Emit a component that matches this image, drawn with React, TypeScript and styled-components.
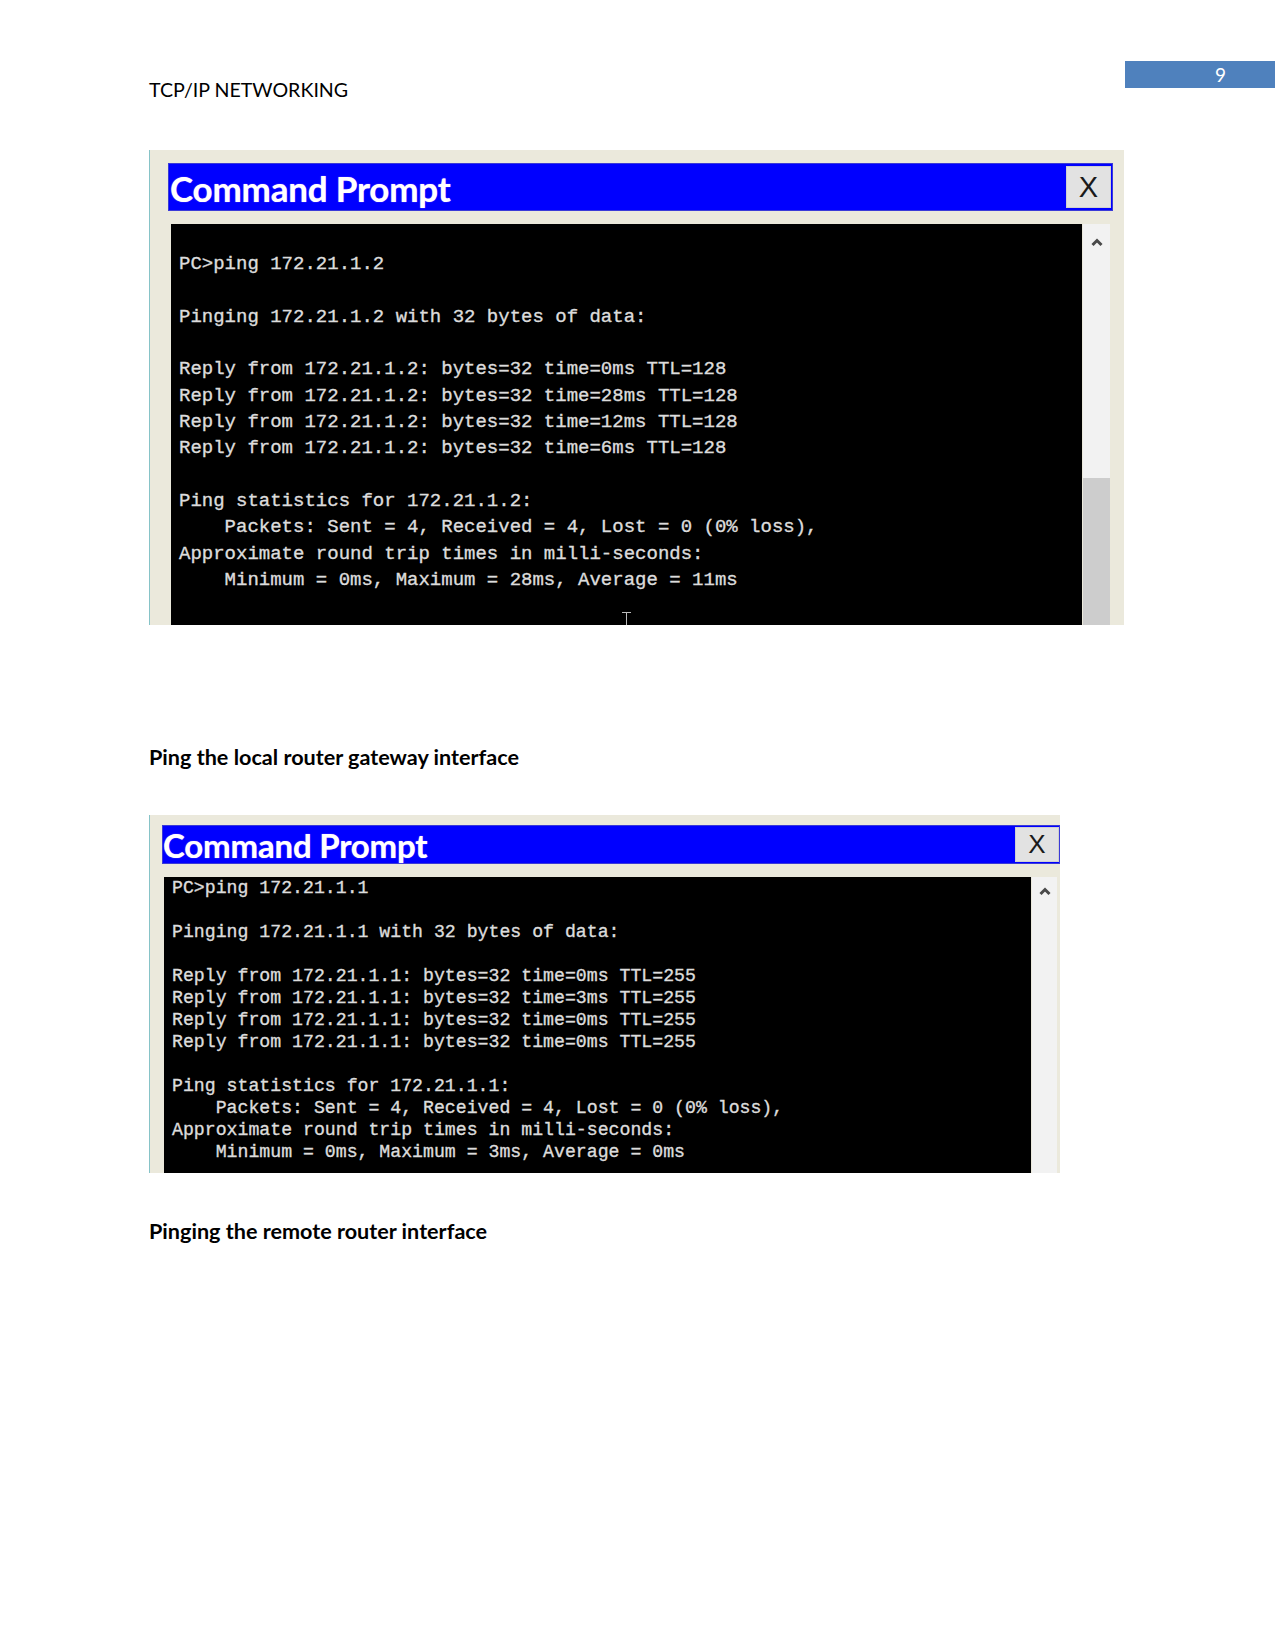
import React from "react";
import styled, { createGlobalStyle } from "styled-components";

const GlobalStyle = createGlobalStyle`
  html, body { margin: 0; padding: 0; background: #ffffff; }
  * { box-sizing: border-box; }
`;

const Page = styled.div`
  width: 1275px;
  min-height: 1650px;
  padding-left: 149px;
  font-family: Lato, "Liberation Sans", sans-serif;
  color: #000;
`;

const Header = styled.header`
  display: flex;
  justify-content: space-between;
  align-items: flex-start;
  padding-top: 61px;
`;

const RunningHead = styled.div`
  margin-top: 17px;
  font-size: 19.6px;
  line-height: 23px;
`;

const PageNumber = styled.div`
  width: 150px;
  height: 27px;
  background: #4f81bd;
  color: #ffffff;
  font-size: 19px;
  line-height: 27px;
  padding-left: 90px;
`;

type Size = "large" | "small";

const Window = styled.div<{ $size: Size }>`
  position: relative;
  overflow: hidden;
  background: #ebe9dc;
  margin-top: ${(p) => (p.$size === "large" ? "49px" : "45px")};
  width: ${(p) => (p.$size === "large" ? "975px" : "911px")};
  height: ${(p) => (p.$size === "large" ? "475px" : "358px")};
  padding: ${(p) => (p.$size === "large" ? "13px 11px 0 18px" : "10px 0 0 12px")};
  border-left: 1px solid #86c3c7;
  display: flex;
  flex-direction: column;
`;

const TitleBar = styled.div<{ $size: Size }>`
  display: flex;
  justify-content: space-between;
  align-items: flex-start;
  background: #0000ff;
  border: 1px solid #3a3ad8;
  height: ${(p) => (p.$size === "large" ? "48px" : "39px")};
  padding: ${(p) => (p.$size === "large" ? "2px 1px 0 1px" : "1px 0 0 0")};
  flex: none;
`;

const Title = styled.div<{ $size: Size }>`
  color: #ffffff;
  font-family: Lato, "Open Sans", sans-serif;
  font-weight: 700;
  font-size: ${(p) => (p.$size === "large" ? "35px" : "33px")};
  line-height: ${(p) => (p.$size === "large" ? "44px" : "36px")};
  letter-spacing: -0.2px;
  text-shadow: 0 0 1px rgba(255, 200, 255, 0.8);
`;

const CloseButton = styled.div<{ $size: Size }>`
  width: ${(p) => (p.$size === "large" ? "45px" : "44px")};
  height: ${(p) => (p.$size === "large" ? "42px" : "35px")};
  background: #e2e2e2;
  border: 1px solid #d0d0d0;
  color: #1a1a1a;
  font-family: "Liberation Sans", Arial, sans-serif;
  font-size: ${(p) => (p.$size === "large" ? "29px" : "26px")};
  line-height: ${(p) => (p.$size === "large" ? "40px" : "33px")};
  text-align: center;
`;

const Body = styled.div<{ $size: Size }>`
  flex: 1;
  display: flex;
  margin: ${(p) => (p.$size === "large" ? "13px 3px 0 3px" : "13px 3px 0 2px")};
  min-height: 0;
`;

const Terminal = styled.pre<{ $size: Size }>`
  position: relative;
  margin: 0;
  flex: 1;
  background: #000000;
  color: #dcdcdc;
  font-family: "Liberation Mono", "Courier New", monospace;
  font-size: ${(p) => (p.$size === "large" ? "19px" : "18.2px")};
  line-height: ${(p) => (p.$size === "large" ? "26.33px" : "22px")};
  padding: ${(p) => (p.$size === "large" ? "27px 0 0 8px" : "0 0 0 8px")};
  white-space: pre;
  overflow: hidden;
  -webkit-text-stroke: 0.35px #dcdcdc;
`;

const ScrollBar = styled.div<{ $size: Size }>`
  width: ${(p) => (p.$size === "large" ? "27px" : "25px")};
  margin-left: 1px;
  background: #f1f1f1;
  display: flex;
  flex-direction: column;
  align-items: center;
  flex: none;
`;

const ScrollUp = styled.div<{ $size: Size }>`
  height: ${(p) => (p.$size === "large" ? "254px" : "100%")};
  width: 100%;
  display: flex;
  justify-content: center;
  padding-top: ${(p) => (p.$size === "large" ? "14px" : "10px")};
  background: #f2f2f2;
`;

const ScrollThumb = styled.div`
  flex: 1;
  width: 100%;
  background: #cdcdcd;
`;

const IBeam = styled.div`
  position: absolute;
  left: 451px;
  bottom: 0;
  width: 9px;
  height: 13px;
  border-top: 1px solid #bbbbbb;
  &::after {
    content: "";
    position: absolute;
    left: 4px;
    top: 0;
    width: 1px;
    height: 13px;
    background: #bbbbbb;
  }
`;

const Caption = styled.p<{ $gap: number }>`
  margin: ${(p) => p.$gap}px 0 0 0;
  font-weight: 700;
  font-size: 21.6px;
  line-height: 26px;
`;

const Chevron = () => (
  <svg width="12" height="9" viewBox="0 0 12 9">
    <path d="M1.5 7 L6 2.5 L10.5 7" fill="none" stroke="#4a4a4a" strokeWidth="3" />
  </svg>
);

const text1 = `PC>ping 172.21.1.2

Pinging 172.21.1.2 with 32 bytes of data:

Reply from 172.21.1.2: bytes=32 time=0ms TTL=128
Reply from 172.21.1.2: bytes=32 time=28ms TTL=128
Reply from 172.21.1.2: bytes=32 time=12ms TTL=128
Reply from 172.21.1.2: bytes=32 time=6ms TTL=128

Ping statistics for 172.21.1.2:
    Packets: Sent = 4, Received = 4, Lost = 0 (0% loss),
Approximate round trip times in milli-seconds:
    Minimum = 0ms, Maximum = 28ms, Average = 11ms`;

const text2 = `PC>ping 172.21.1.1

Pinging 172.21.1.1 with 32 bytes of data:

Reply from 172.21.1.1: bytes=32 time=0ms TTL=255
Reply from 172.21.1.1: bytes=32 time=3ms TTL=255
Reply from 172.21.1.1: bytes=32 time=0ms TTL=255
Reply from 172.21.1.1: bytes=32 time=0ms TTL=255

Ping statistics for 172.21.1.1:
    Packets: Sent = 4, Received = 4, Lost = 0 (0% loss),
Approximate round trip times in milli-seconds:
    Minimum = 0ms, Maximum = 3ms, Average = 0ms`;

const CommandWindow: React.FC<{ size: Size; text: string; cursor?: boolean }> = ({ size, text, cursor }) => (
  <Window $size={size}>
    <TitleBar $size={size}>
      <Title $size={size}>Command Prompt</Title>
      <CloseButton $size={size}>X</CloseButton>
    </TitleBar>
    <Body $size={size}>
      <Terminal $size={size}>
        {text}
        {cursor && <IBeam />}
      </Terminal>
      <ScrollBar $size={size}>
        <ScrollUp $size={size}>
          <Chevron />
        </ScrollUp>
        {size === "large" && <ScrollThumb />}
      </ScrollBar>
    </Body>
  </Window>
);

export default function App() {
  return (
    <>
      <GlobalStyle />
      <Page>
        <Header>
          <RunningHead>TCP/IP NETWORKING</RunningHead>
          <PageNumber>9</PageNumber>
        </Header>
        <CommandWindow size="large" text={text1} cursor />
        <Caption $gap={119}>Ping the local router gateway interface</Caption>
        <CommandWindow size="small" text={text2} />
        <Caption $gap={45}>Pinging the remote router interface</Caption>
      </Page>
    </>
  );
}
